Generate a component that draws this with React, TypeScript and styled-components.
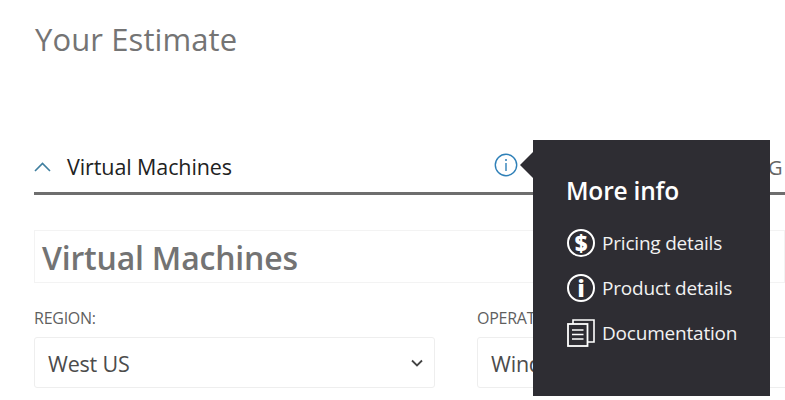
import React from "react";
import styled, { createGlobalStyle } from "styled-components";

const GlobalStyle = createGlobalStyle`
	html, body {
		margin: 0;
		padding: 0;
		background: #fff;
	}
	body {
		font-family: "Open Sans", "Noto Sans", "Liberation Sans", sans-serif;
	}
`;

const Page = styled.div`
	position: relative;
	width: 785px;
	height: 400px;
	overflow: hidden;
	padding-left: 34px;
	box-sizing: border-box;
`;

const Title = styled.h1`
	margin: 0;
	height: 140px;
	padding: 18px 0 0 1px;
	box-sizing: border-box;
	font-size: 31px;
	line-height: 42px;
	font-weight: 400;
	letter-spacing: 0.1px;
	color: #747474;
`;

const AccordionHeader = styled.div`
	display: flex;
	align-items: center;
	height: 55px;
	padding-bottom: 3px;
	box-sizing: border-box;
	border-bottom: 3px solid #6e6e6e;
	width: 751px;
`;

const Chevron = styled.svg`
	width: 17px;
	height: 10px;
	margin-right: 16px;
	margin-top: 5px;
`;

const HeaderName = styled.span`
	font-size: 21.5px;
	line-height: 26px;
	letter-spacing: -0.1px;
	color: #222;
	margin-top: 5px;
`;

const InfoButton = styled.svg`
	width: 24px;
	height: 24px;
	margin-left: auto;
	margin-right: 267px;
	margin-top: 1px;
`;

const HiddenText = styled.span`
	position: absolute;
	left: 768px;
	top: 155px;
	font-size: 20px;
	line-height: 26px;
	color: #666;
`;

const NameField = styled.div`
	margin-top: 35px;
	width: 751px;
	height: 53px;
	box-sizing: border-box;
	border: 1px solid #f3f3f3;
	padding-left: 7px;
	font-size: 32px;
	line-height: 54px;
	font-weight: 600;
	letter-spacing: -0.2px;
	color: #737373;
`;

const FieldGrid = styled.div`
	display: grid;
	grid-template-columns: 401px 401px;
	column-gap: 42px;
	margin-top: 26px;
`;

const Field = styled.div`
	display: flex;
	flex-direction: column;
`;

const FieldLabel = styled.label`
	font-size: 16px;
	line-height: 19px;
	letter-spacing: -0.25px;
	color: #5f5f5f;
	margin-bottom: 9px;
`;

const SelectBox = styled.div`
	display: flex;
	align-items: center;
	justify-content: space-between;
	height: 51px;
	box-sizing: border-box;
	border: 1px solid #eeeeee;
	border-radius: 3px;
	padding: 1px 11px 0 13px;
	font-size: 21.5px;
	letter-spacing: -0.2px;
	color: #4c4c4c;
`;

const SelectArrow = styled.svg`
	width: 12px;
	height: 8px;
`;

const Popover = styled.div`
	position: absolute;
	left: 533px;
	top: 140px;
	width: 237px;
	height: 256px;
	box-sizing: border-box;
	padding: 34px 0 0 33px;
	background: #2e2d33;
	color: #fff;

	&::before {
		content: "";
		position: absolute;
		left: -13px;
		top: 12px;
		border-style: solid;
		border-width: 13px 13px 13px 0;
		border-color: transparent #2e2d33 transparent transparent;
	}
`;

const PopoverTitle = styled.div`
	font-size: 24.5px;
	line-height: 33px;
	font-weight: 600;
	letter-spacing: -0.2px;
	margin-bottom: 21px;
`;

const LinkList = styled.div`
	display: flex;
	flex-direction: column;
	gap: 15px;
`;

const LinkRow = styled.div`
	display: flex;
	align-items: center;
	gap: 7px;
	height: 30px;
	font-size: 19px;
	letter-spacing: -0.2px;
	color: #f2f2f2;
`;

const IconRing = styled.span`
	display: flex;
	align-items: center;
	justify-content: center;
	flex: none;
	width: 28px;
	height: 28px;
	margin-left: 1px;
	box-sizing: border-box;
	border: 2px solid #fff;
	border-radius: 50%;
	font-size: 22px;
	line-height: 24px;
	font-weight: 800;
	letter-spacing: 0;
	color: #fff;
`;

const DocsGlyph = styled.svg`
	width: 28px;
	height: 28px;
	flex: none;
	margin-left: 1px;
`;

const DocsIcon = () => (
	<DocsGlyph viewBox="0 0 28 28">
		<path d="M6 5V1h21v22h-6" fill="none" stroke="#fff" strokeWidth="1.6" />
		<rect x="1" y="5" width="19.5" height="22" fill="none" stroke="#fff" strokeWidth="1.8" />
		<path d="M5 11h11.500M5 15.500h11.500M5 20h11.500" stroke="#fff" strokeWidth="1.7" />
	</DocsGlyph>
);

export default function App() {
	return (
		<Page>
			<GlobalStyle />
			<Title>Your Estimate</Title>
			<AccordionHeader>
				<Chevron viewBox="0 0 17 10">
					<path d="M1 9l7.500-7.500L16 9" fill="none" stroke="#3f7f9f" strokeWidth="1.6" />
				</Chevron>
				<HeaderName>Virtual Machines</HeaderName>
				<InfoButton viewBox="0 0 24 24">
					<circle cx="12" cy="12" r="10.700" fill="none" stroke="#2f80b8" strokeWidth="1.4" />
					<circle cx="12" cy="7" r="1" fill="#2f80b8" />
					<path d="M12 10v8" stroke="#2f80b8" strokeWidth="1.4" />
				</InfoButton>
				<HiddenText>G</HiddenText>
			</AccordionHeader>
			<NameField>Virtual Machines</NameField>
			<FieldGrid>
				<Field>
					<FieldLabel>REGION:</FieldLabel>
					<SelectBox>
						West US
						<SelectArrow viewBox="0 0 12 8">
							<path d="M1 1.500l5 5 5-5" fill="none" stroke="#444" strokeWidth="1.8" />
						</SelectArrow>
					</SelectBox>
				</Field>
				<Field>
					<FieldLabel>OPERATING SYSTEM:</FieldLabel>
					<SelectBox>Windows</SelectBox>
				</Field>
			</FieldGrid>
			<Popover>
				<PopoverTitle>More info</PopoverTitle>
				<LinkList>
					<LinkRow>
						<IconRing>$</IconRing>
						Pricing details
					</LinkRow>
					<LinkRow>
						<IconRing>i</IconRing>
						Product details
					</LinkRow>
					<LinkRow>
						<DocsIcon />
						Documentation
					</LinkRow>
				</LinkList>
			</Popover>
		</Page>
	);
}
